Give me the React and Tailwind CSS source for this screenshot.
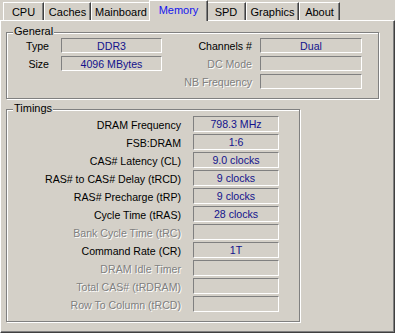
import React from "react";

const tabs = [
  { name: "CPU", w: "w-[41px]" },
  { name: "Caches", w: "w-[47px]" },
  { name: "Mainboard", w: "w-[60px]" },
  { name: "Memory", w: "w-[59px]", active: true },
  { name: "SPD", w: "w-[40px]" },
  { name: "Graphics", w: "w-[53px]" },
  { name: "About", w: "w-[41px]" },
];

const timings = [
  { label: "DRAM Frequency", value: "798.3 MHz" },
  { label: "FSB:DRAM", value: "1:6" },
  { label: "CAS# Latency (CL)", value: "9.0 clocks" },
  { label: "RAS# to CAS# Delay (tRCD)", value: "9 clocks" },
  { label: "RAS# Precharge (tRP)", value: "9 clocks" },
  { label: "Cycle Time (tRAS)", value: "28 clocks" },
  { label: "Bank Cycle Time (tRC)", value: "", off: true },
  { label: "Command Rate (CR)", value: "1T" },
  { label: "DRAM Idle Timer", value: "", off: true },
  { label: "Total CAS# (tRDRAM)", value: "", off: true },
  { label: "Row To Column (tRCD)", value: "", off: true },
];

const Field = ({ value, className }) => (
  <div
    className={`border-t border-l border-t-[#808080] border-l-[#808080] border-b border-r border-b-white border-r-white text-center text-[#12128c] leading-[14px] ${className}`}
  >
    {value}
  </div>
);

const Label = ({ text, off, className }) => (
  <div
    className={`text-right whitespace-nowrap leading-[14px] pt-[1px] ${
      off ? "text-[#808080] [text-shadow:1px_1px_0_#fff]" : "text-black"
    } ${className}`}
  >
    {text}
  </div>
);

const Group = ({ title, className, children }) => (
  <div
    className={`relative border border-[#808080] shadow-[inset_1px_1px_0_#fff,1px_1px_0_#fff] ${className}`}
  >
    <span className="absolute left-[6px] top-[-8px] px-[1px] bg-[#d4d0c8] leading-[13px] text-[11px] text-black">
      {title}
    </span>
    {children}
  </div>
);

export default function App() {
  return (
    <div className="w-[395px] h-[333px] bg-[#d4d0c8] overflow-hidden text-[10.6px] font-['Liberation_Sans',Arial,sans-serif]">
      {/* tab strip */}
      <div className="flex items-end h-[20px] pl-[3px] text-[11px]">
        {tabs.map((t) =>
          t.active ? (
            <div
              key={t.name}
              className={`relative z-10 self-start h-[21px] -mx-[2px] ${t.w} bg-[#d4d0c8] border-l border-t border-white border-r border-r-[#404040] shadow-[inset_-1px_0_0_#808080] flex items-center justify-center pb-[2px] text-[#1515ee]`}
            >
              {t.name}
            </div>
          ) : (
            <div
              key={t.name}
              className={`h-[18px] ${t.w} border-l border-t border-white border-r border-r-[#404040] shadow-[inset_-1px_0_0_#808080] flex items-center justify-center pt-[1px] text-black`}
            >
              {t.name}
            </div>
          )
        )}
      </div>

      {/* panel */}
      <div className="h-[313px] border-t border-l border-white border-r border-b border-r-[#404040] border-b-[#404040] shadow-[inset_-1px_-1px_0_#808080] pt-[11px] pl-[5px]">
        <Group title="General" className="w-[373px] h-[67px]">
          <div className="flex pt-[5px]">
            <div className="flex flex-col gap-[3px]">
              <div className="flex items-center h-[15px]">
                <Label text="Type" className="w-[42px]" />
                <Field value="DDR3" className="ml-[12px] w-[101px] h-[15px]" />
              </div>
              <div className="flex items-center h-[15px]">
                <Label text="Size" className="w-[42px]" />
                <Field value="4096 MBytes" className="ml-[12px] w-[101px] h-[15px]" />
              </div>
            </div>
            <div className="flex flex-col gap-[3px]">
              <div className="flex items-center h-[15px]">
                <Label text="Channels #" className="w-[90px]" />
                <Field value="Dual" className="ml-[8px] w-[102px] h-[15px]" />
              </div>
              <div className="flex items-center h-[15px]">
                <Label text="DC Mode" off className="w-[90px]" />
                <Field value="" className="ml-[8px] w-[102px] h-[15px]" />
              </div>
              <div className="flex items-center h-[15px]">
                <Label text="NB Frequency" off className="w-[90px]" />
                <Field value="" className="ml-[8px] w-[102px] h-[15px]" />
              </div>
            </div>
          </div>
        </Group>

        <Group title="Timings" className="mt-[10px] w-[294px] h-[213px]">
          <div className="flex flex-col gap-[2px] pt-[6px]">
            {timings.map((r) => (
              <div key={r.label} className="flex items-center h-[16px]">
                <Label text={r.label} off={r.off} className="w-[174px]" />
                <Field value={r.value} className="ml-[12px] w-[86px] h-[16px]" />
              </div>
            ))}
          </div>
        </Group>
      </div>
    </div>
  );
}
